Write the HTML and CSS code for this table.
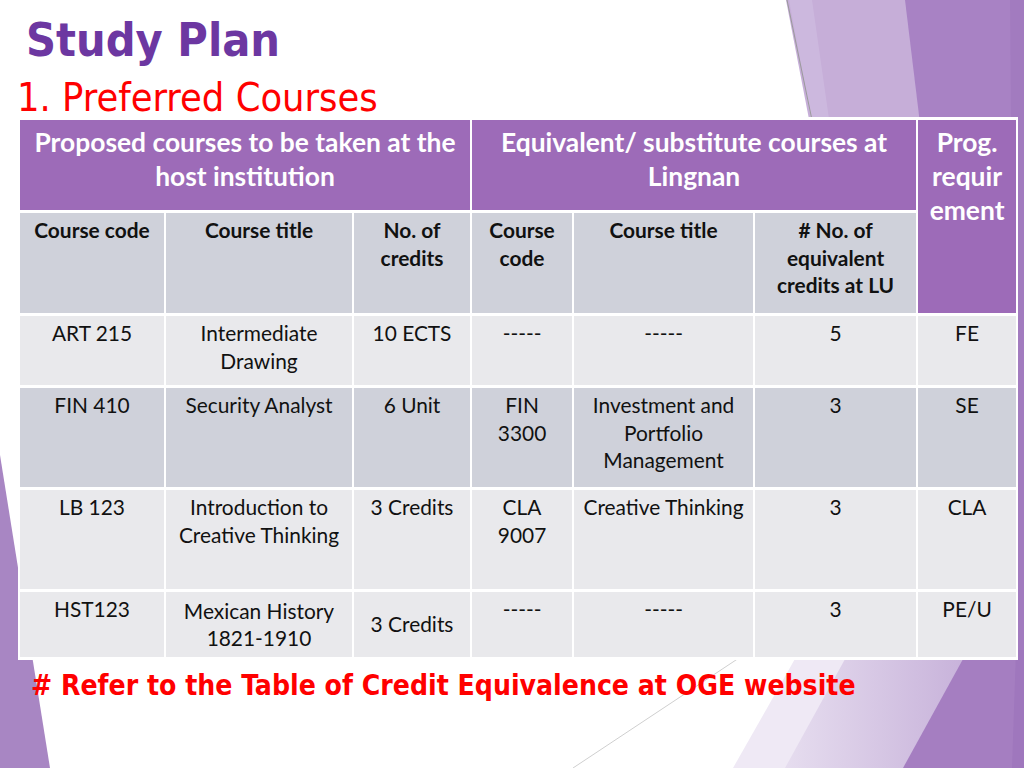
FILE: index.html
```html
<!DOCTYPE html>
<html lang="en">
<head>
<meta charset="utf-8">
<title>Study Plan</title>
<link rel="stylesheet" href="styles.css">
</head>
<body>
<div class="slide">
  <svg class="bg" width="1024" height="768" viewBox="0 0 1024 768" aria-hidden="true">
    <defs>
      <linearGradient id="lilac" x1="0" y1="0" x2="1" y2="0">
        <stop offset="0" stop-color="#e6ddef"/>
        <stop offset="1" stop-color="#c6b0d9"/>
      </linearGradient>
    </defs>
    <!-- top right -->
    <polygon points="786,0 1024,0 1024,140 813,140" fill="#c6aed8"/>
    <polygon points="789,0 812,0 832,140 815,140" fill="#ccb8de"/>
    <polygon points="905,0 1024,0 1024,700 990,700" fill="#a882c4"/>
    <polygon points="1010,0 1024,0 1024,700 1016,700" fill="#a27bbf"/>
    <line x1="787" y1="0" x2="812" y2="120" stroke="#9a9a9a" stroke-width="1"/>
    <!-- bottom right -->
    <polygon points="800,650 975,650 905,768 733,768" fill="#efe9f5"/>
    <polygon points="850,650 975,650 905,768 785,768" fill="url(#lilac)"/>
    <polygon points="968,650 1024,650 1024,768 903,768" fill="#a57ec1"/>
    <polygon points="1016,650 1024,650 1024,768 1012,768" fill="#9f77bd"/>
    <line x1="745" y1="654" x2="573" y2="768" stroke="#cfcfcf" stroke-width="1"/>
    <!-- left -->
    <polygon points="0,455 50,768 0,768" fill="#a886c3"/>
  </svg>

  <div class="content">
    <h1 class="title">Study Plan</h1>
    <h2 class="subtitle">1. Preferred Courses</h2>

    <table class="plan">
      <colgroup>
        <col class="c1"><col class="c2"><col class="c3"><col class="c4"><col class="c5"><col class="c6"><col class="c7">
      </colgroup>
      <tr class="r-head">
        <th colspan="3">Proposed courses to be taken at the<br>host institution</th>
        <th colspan="3">Equivalent/ substitute courses at<br>Lingnan</th>
        <th rowspan="2" class="prog">Prog.<br>requir<br>ement</th>
      </tr>
      <tr class="r-sub">
        <th>Course code</th>
        <th>Course title</th>
        <th>No. of<br>credits</th>
        <th>Course<br>code</th>
        <th>Course title</th>
        <th># No. of<br>equivalent<br>credits at LU</th>
      </tr>
      <tr class="r-light r-short">
        <td>ART 215</td>
        <td>Intermediate<br>Drawing</td>
        <td>10 ECTS</td>
        <td>-----</td>
        <td>-----</td>
        <td>5</td>
        <td>FE</td>
      </tr>
      <tr class="r-dark r-tall">
        <td>FIN 410</td>
        <td>Security Analyst</td>
        <td>6 Unit</td>
        <td>FIN<br>3300</td>
        <td>Investment and<br>Portfolio<br>Management</td>
        <td>3</td>
        <td>SE</td>
      </tr>
      <tr class="r-light r-tall">
        <td>LB 123</td>
        <td>Introduction to<br>Creative Thinking</td>
        <td>3 Credits</td>
        <td>CLA<br>9007</td>
        <td>Creative Thinking</td>
        <td>3</td>
        <td>CLA</td>
      </tr>
      <tr class="r-light r-last">
        <td>HST123</td>
        <td class="mid">Mexican History<br>1821-1910</td>
        <td class="mid">3 Credits</td>
        <td>-----</td>
        <td>-----</td>
        <td>3</td>
        <td>PE/U</td>
      </tr>
    </table>

    <p class="note"># Refer to the Table of Credit Equivalence at OGE website</p>
  </div>
</div>
</body>
</html>
```

FILE: styles.css
```css
html, body {
  margin: 0;
  padding: 0;
  background: #fff;
}

.slide {
  position: relative;
  width: 1024px;
  height: 768px;
  overflow: hidden;
  background: #fff;
}

.bg {
  position: absolute;
  left: 0;
  top: 0;
  z-index: 0;
}

.content {
  position: relative;
  z-index: 1;
  display: flex;
  flex-direction: column;
  align-items: flex-start;
}

.title {
  margin: 17px 0 0 26px;
  font-family: "DejaVu Sans Condensed", "DejaVu Sans", sans-serif;
  font-stretch: condensed;
  font-weight: bold;
  font-size: 46.4px;
  line-height: 46px;
  color: #6c37a1;
}

.subtitle {
  margin: 15px 0 0 17px;
  font-family: "DejaVu Sans Condensed", "DejaVu Sans", sans-serif;
  font-stretch: condensed;
  font-weight: normal;
  font-size: 39.4px;
  line-height: 38.5px;
  color: #ff0000;
}

.plan {
  margin: 0 0 0 18px;
  width: 1000px;
  table-layout: fixed;
  border-collapse: separate;
  border-spacing: 2px 3px;
  background: #fff;
  font-family: Lato, "Liberation Sans", sans-serif;
}

.c1 { width: 144px; }
.c2 { width: 186px; }
.c3 { width: 116px; }
.c4 { width: 100px; }
.c5 { width: 179px; }
.c6 { width: 161px; }
.c7 { width: 98px; }

.plan th,
.plan td {
  padding: 3.5px 1px 0;
  vertical-align: top;
  text-align: center;
  font-size: 20.9px;
  line-height: 27.5px;
  color: #111;
  font-weight: normal;
  overflow: hidden;
}

.r-head { height: 90px; }
.r-head th {
  background: #9d6bb8;
  color: #fff;
  font-weight: bold;
  font-size: 26.4px;
  line-height: 34px;
  padding-top: 5px;
}

.r-sub { height: 100px; }
.r-sub th {
  background: #cfd1da;
  font-weight: bold;
}

.r-light td { background: #e9e9ec; }
.r-dark td { background: #cfd1da; }

.r-short { height: 69px; }
.r-tall { height: 99px; }
.r-last { height: 65px; }

.plan td.mid { vertical-align: middle; padding-top: 0; }

.note {
  margin: 12px 0 0 31px;
  font-family: "DejaVu Sans Condensed", "DejaVu Sans", sans-serif;
  font-stretch: condensed;
  font-weight: bold;
  font-size: 28.1px;
  line-height: 28px;
  color: #ff0000;
}
```
